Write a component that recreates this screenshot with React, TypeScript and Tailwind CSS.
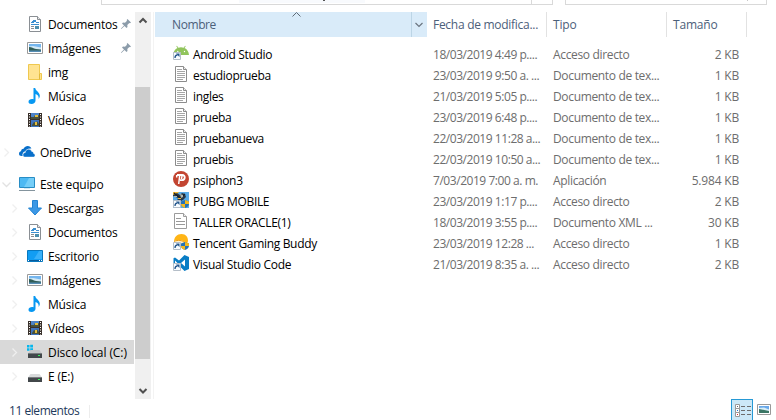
import type { ReactNode } from "react";

const Svg = ({ children }: { children: ReactNode }) => (
  <svg width="16" height="16" viewBox="0 0 16 16" className="block shrink-0">{children}</svg>
);

const DocIcon = () => (
  <Svg>
    <path d="M2.5.5h8l3 3v12h-11z" fill="#fff" stroke="#8a8f94" />
    <path d="M10.5.5v3h3" fill="#e8e8e8" stroke="#8a8f94" />
    <path d="M4 6.500h3M6 4.500h3M5 5.500h4M9 6.500h3M4 8.500h8" stroke="#3b8fd0" />
    <path d="M4 10.500h3M4 12.500h3" stroke="#8a8f94" />
    <path d="M8 10h4v3H8z" fill="#4d8fae" />
  </Svg>
);
const ImageIcon = () => (
  <Svg>
    <path d="M.5 2.500h15v11H.5z" fill="#fff" stroke="#9a9a9a" />
    <path d="M2 4h12v8H2z" fill="#75b6ee" />
    <path d="M2 6.500l4-.5 8 1.500V10H2z" fill="#d3e9f5" />
    <path d="M2 7c3 0 4 1.500 7 2l5 .5V11H2z" fill="#315d57" />
    <path d="M2 10.500h12V12H2z" fill="#568eb5" />
  </Svg>
);
const FolderIcon = () => (
  <Svg>
    <path d="M1.500.5h11v9h2v6h-13z" fill="#ffe391" stroke="#efc84f" />
    <path d="M12.500 9.500v6" stroke="#e2b93b" />
  </Svg>
);
const MusicIcon = () => (
  <Svg>
    <path d="M6.500 0h1.700c.3 3 4.600 4 4.600 7.800 0 1.300-.5 2.400-1.200 3.200.5-2.700-.7-4.300-3.100-5v6.700c0 1.900-1.700 3.300-4 3.300-2 0-3-1-3-2.300C1.500 12 3.200 11 5 11c.6 0 1.100.1 1.500.2z" fill="#0798f2" />
  </Svg>
);
const VideoIcon = () => (
  <Svg>
    <path d="M1 1h14v14H1z" fill="#39312b" />
    <path d="M4 1h8v6H4z" fill="#4d83c7" />
    <path d="M4 8h8v7H4z" fill="#3f74be" />
    <path d="M4 5h3l1-2 2 1 2-1v4H4zM5 13l2-3 2 1 1-2 2 3v2H5z" fill="#46513d" />
    <path d="M8 3h3v2H8zM8 10h2v3H8z" fill="#e4bd3b" />
    <path d="M2.500 2v13M13.500 2v13" stroke="#fff" strokeDasharray="1 1.500" />
  </Svg>
);
const CloudIcon = () => (
  <Svg>
    <path d="M3.700 12H2.500C.9 12 0 11 0 9.700s.9-2.200 2-2.400C2.200 5.500 3.300 4.700 4.600 4.800 5.500 3 7 2 8.700 2c1.900 0 3.100 1 3.700 2.500C8.800 4.200 7 5.600 6.500 7.300 4.300 7.400 3 9.500 3.700 12z" fill="#086fca" />
    <path d="M6.200 13C4.900 13 4 12 4 10.900c0-1.300 1-2.200 2.300-2.300.1-2 1.500-3.300 3.300-3.300 1.500 0 2.600.8 3.100 2.100 1.300.1 1.900 1 1.800 2 1 .2 1.500.9 1.500 1.800 0 1-.7 1.800-1.800 1.800z" fill="#086fca" stroke="#fff" strokeWidth=".4" />
  </Svg>
);
const ComputerIcon = () => (
  <Svg>
    <path d="M.5 1.500h15v10H.5z" fill="#4db9f3" stroke="#288dc5" />
    <path d="M10 2h5v9H5z" fill="#75cef8" />
    <path d="M5 12h6v1H5z" fill="#d5e8f2" />
    <path d="M0 14.500h16" stroke="#84949d" />
  </Svg>
);
const DownloadIcon = () => (
  <Svg><path d="M5.500.5h5V8h4L8 15 1.500 8h4z" fill="#3c98e5" stroke="#2384d3" /></Svg>
);
const DesktopIcon = () => (
  <Svg>
    <path d="M.5 2.500h15v11H.5z" fill="#119df3" stroke="#0878bf" />
    <path d="M12 3h3v8H7z" fill="#39b1fa" />
    <path d="M1 12.500h14" stroke="#075b9b" />
    <path d="M1 12.500h1M12 12.500h1M14 12.500h1" stroke="#fff" />
  </Svg>
);
const DriveIcon = ({ system = false }: { system?: boolean }) => (
  <Svg>
    {system && <path d="M0 1h2.500v2.500H0zm3.200-.3H6v2.800H3.200zM0 4.200h2.500v2.500H0zm3.200 0H6V7H3.200z" fill="#08b7ed" />}
    <path d="M3.500 6h9L15 9.500H1z" fill={system ? "#c4c6c7" : "#d8dadb"} />
    <path d="M1 9.500h14V14H1z" fill="#42474a" />
    <path d="M1 9.500h14" stroke="#777c7e" />
    <path d="M11 11h2v1h-2z" fill="#35f55c" />
  </Svg>
);

const Shortcut = () => (
  <>
    <path d="M.5 8.500h7v7h-7z" fill="#f8fcff" stroke="#b5bec8" />
    <path d="M2 14c0-2 1-3 2.500-3" fill="none" stroke="#24578d" strokeWidth="1.300" />
    <path d="M3 9.500h3.500V13z" fill="#24578d" />
  </>
);
const Shield = () => (
  <>
    <path d="M12 8l4 1.500v2.300c0 2-1.500 3.300-4 4.200-2.500-.9-4-2.200-4-4.200V9.500z" fill="#2473b9" />
    <path d="M12 8l4 1.500V12h-4zM8 12h4v4c-2.500-.9-4-2-4-4z" fill="#f3b91e" />
  </>
);
const AndroidIcon = () => (
  <Svg>
    <path d="M0 10c.3-3.500 2-5.800 4.500-7L3.300 1.200l.6-.4 1.500 1.900a9 9 0 0 1 5.200 0L12.100.8l.6.4L11.500 3c2.600 1.200 4.200 3.500 4.500 7z" fill="#91c45c" />
    <circle cx="4.800" cy="6.500" r=".7" fill="#fff" /><circle cx="11.500" cy="6.500" r=".7" fill="#fff" />
    <g transform="translate(0 -1)"><Shortcut /></g>
  </Svg>
);
const TextIcon = () => (
  <Svg>
    <path d="M2.500.5h8l3 3v12h-11z" fill="#fff" stroke="#8c8c8c" />
    <path d="M10.500.5v3h3" fill="#eee" stroke="#8c8c8c" />
    <path d="M4 3.500h5M4 5.500h8M4 7.500h8M4 9.500h8M4 11.500h8M4 13.500h6" stroke="#a6a6a6" />
  </Svg>
);
const XmlIcon = () => (
  <Svg>
    <path d="M1.500.5h9l3 3v12h-12z" fill="#fff" stroke="#9b9b9b" />
    <path d="M10.500.5v3h3" fill="#eee" stroke="#9b9b9b" />
    <path d="M3 5.500h5M3 8.500h9M3 11.500h9" stroke="#999" />
  </Svg>
);
const PsiphonIcon = () => (
  <Svg>
    <circle cx="8" cy="8" r="8" fill="#c34531" />
    <path d="M4 4h5.200c3.700 0 3.200 5.200-.4 5.200H7" fill="none" stroke="#fff" strokeWidth="1.800" />
    <path d="M6.700 4.500L5.700 13M3.700 4v2.500M9 5l-.5 3" stroke="#fff" strokeWidth="1.500" />
  </Svg>
);
const PubgIcon = () => (
  <Svg>
    <path d="M0 0h16v16H0z" fill="#58aae8" />
    <path d="M0 0h6L3 3.500H0z" fill="#f2b734" />
    <path d="M0 3l4-2 3 2 2-2 3 1 1 3-3 3-2 1H4l1-3-5-2z" fill="#283849" />
    <path d="M1 1l6 5 5-4" fill="none" stroke="#171f27" strokeWidth="1.200" />
    <path d="M7 2l3 1v2L8 6zM1 4h3v1H1z" fill="#b4b7ae" />
    <path d="M5 6h3v1H5z" fill="#edb83a" />
    <Shortcut /><Shield />
  </Svg>
);
const BuddyIcon = () => (
  <Svg>
    <path d="M1 8C1 3 4 0 8.500 0 13 0 15 3 15 6.500c0 1.500-.5 2.500-2 3L8 8z" fill="#ffb516" />
    <path d="M1 7c4-2 8-1 11 1l-1 2H1z" fill="#fff1cb" />
    <path d="M1 7.500c4-2 8-1 11 1" fill="none" stroke="#ed9d12" />
    <Shortcut /><Shield />
  </Svg>
);
const CodeIcon = () => (
  <Svg>
    <path d="M11.500 0L16 2v12l-4.500 2L6 10.500 2 13.500.5 12.700V3.300L2 2.500l4 3zM12 4.500L8 8l4 3.500zM2 5.500v5L4.500 8z" fill="#087dc5" fillRule="evenodd" />
    <Shortcut />
  </Svg>
);
const Pin = () => (
  <svg width="10" height="10" viewBox="0 0 10 10" className="ml-auto mr-[3px] block shrink-0">
    <path d="M6.500 0L10 3.500l-1 .8-.7-.3-2 2 .2 2-1 1-2-2L.6 9.800 0 10l.2-.7L3 6.500l-2-2 1-1 2 .2 2-2-.3-.7z" fill="#8c9caa" />
  </svg>
);
const Chevron = ({ down = false }: { down?: boolean }) => (
  <svg width="9" height="9" viewBox="0 0 9 9" className="block shrink-0">
    <path d={down ? "M.5 2.500l4 4 4-4" : "M2.500.5l4 4-4 4"} fill="none" stroke={down ? "#e2e2e2" : "#efefef"} strokeWidth="1.300" />
  </svg>
);

type Place = { name: string; icon: () => ReactNode; pinned?: boolean; expand?: boolean; active?: boolean };

const quick: Place[] = [
  { name: "Documentos", icon: DocIcon, pinned: true },
  { name: "Imágenes", icon: ImageIcon, pinned: true },
  { name: "img", icon: FolderIcon },
  { name: "Música", icon: MusicIcon },
  { name: "Vídeos", icon: VideoIcon },
];
const computer: Place[] = [
  { name: "Descargas", icon: DownloadIcon, expand: true },
  { name: "Documentos", icon: DocIcon, expand: true },
  { name: "Escritorio", icon: DesktopIcon, expand: true },
  { name: "Imágenes", icon: ImageIcon, expand: true },
  { name: "Música", icon: MusicIcon, expand: true },
  { name: "Vídeos", icon: VideoIcon, expand: true },
  { name: "Disco local (C:)", icon: () => <DriveIcon system />, expand: true, active: true },
  { name: "E (E:)", icon: () => <DriveIcon />, expand: true },
];

const PlaceRow = ({ name, icon: Icon, pinned, expand, active }: Place) => (
  <div className={`flex h-6 w-[134px] items-center ${active ? "bg-[#d9d9d9] tracking-[-0.08px]" : ""}`}>
    <div className="flex w-[27px] shrink-0 justify-end pr-[8px]">{expand && <Chevron />}</div>
    <Icon />
    <span className="ml-[5px] pt-[2px]">{name}</span>
    {pinned && <Pin />}
  </div>
);
const RootRow = ({ name, open, children }: { name: string; open?: boolean; children: ReactNode }) => (
  <div className="flex h-6 items-center">
    <div className="flex w-[19px] shrink-0 justify-end pr-[8px]"><Chevron down={open} /></div>
    {children}
    <span className="ml-[5px] pt-[2px]">{name}</span>
  </div>
);

type FileEntry = [() => ReactNode, string, string, string, string];
const files: FileEntry[] = [
  [AndroidIcon, "Android Studio", "18/03/2019 4:49 p....", "Acceso directo", "2 KB"],
  [TextIcon, "estudioprueba", "23/03/2019 9:50 a. ...", "Documento de tex...", "1 KB"],
  [TextIcon, "ingles", "21/03/2019 5:05 p....", "Documento de tex...", "1 KB"],
  [TextIcon, "prueba", "23/03/2019 6:48 p....", "Documento de tex...", "1 KB"],
  [TextIcon, "pruebanueva", "22/03/2019 11:28 a...", "Documento de tex...", "1 KB"],
  [TextIcon, "pruebis", "22/03/2019 10:50 a...", "Documento de tex...", "1 KB"],
  [PsiphonIcon, "psiphon3", "7/03/2019 7:00 a. m.", "Aplicación", "5.984 KB"],
  [PubgIcon, "PUBG MOBILE", "23/03/2019 1:17 p....", "Acceso directo", "2 KB"],
  [XmlIcon, "TALLER ORACLE(1)", "18/03/2019 3:55 p....", "Documento XML ...", "30 KB"],
  [BuddyIcon, "Tencent Gaming Buddy", "23/03/2019 12:28 ...", "Acceso directo", "1 KB"],
  [CodeIcon, "Visual Studio Code", "21/03/2019 8:35 a. ...", "Acceso directo", "2 KB"],
];

const ScrollArrow = ({ down = false }: { down?: boolean }) => (
  <svg width="16" height="17" viewBox="0 0 16 17" className="block shrink-0">
    <path d={down ? "M4.500 7l3.500 3.500L11.500 7" : "M4.500 10.500L8 7l3.500 3.500"} fill="none" stroke="#505050" strokeWidth="2" />
  </svg>
);

export default function App() {
  return (
    <div className="flex h-[420px] w-[776px] flex-col overflow-hidden whitespace-nowrap bg-white font-['Open_Sans','Noto_Sans',sans-serif] text-[12px] leading-4 tracking-[-0.18px] text-black">
      <div className="flex h-3 shrink-0 items-start">
        <div className="ml-[101px] flex h-[5px] w-[452px] border-x border-b border-[#d9d9d9]">
          <div className="ml-[137px] h-[3px] w-[126px] bg-[#f8fafd]">
            <div className="ml-[84px] h-px w-[2px] bg-[#555]" />
          </div>
          <div className="ml-auto mr-[20px] w-px bg-[#d9d9d9]" />
        </div>
        <div className="ml-3 flex h-[5px] w-[202px] border-x border-b border-[#d9d9d9]">
          <div className="ml-auto mr-[18px] h-px w-px bg-[#c8c8c8]" />
        </div>
      </div>

      <div className="flex h-[387px] shrink-0">
        <aside className="w-[135px] shrink-0 overflow-hidden">
          {quick.map((p) => <PlaceRow key={p.name} {...p} />)}
          <div className="h-2" />
          <RootRow name="OneDrive"><CloudIcon /></RootRow>
          <div className="h-2" />
          <RootRow name="Este equipo" open><ComputerIcon /></RootRow>
          {computer.map((p) => <PlaceRow key={p.name} {...p} />)}
        </aside>
        <div className="flex w-4 shrink-0 flex-col bg-[#f0f0f0]">
          <ScrollArrow />
          <div className="mt-[58px] h-[272px] w-[15px] bg-[#cdcdcd]" />
          <div className="mt-auto"><ScrollArrow down /></div>
        </div>
        <div className="ml-[2px] w-px bg-[#f3f3f3]" />

        <main className="ml-px">
          <div className="flex h-[25px] text-[#4c607a]">
            <div className="relative flex w-[272px] items-center bg-[#d9ebf9] pl-[17px]">
              <span className="tracking-[-0.4px]">Nombre</span>
              <svg width="9" height="6" viewBox="0 0 9 6" className="absolute left-[137px] top-0">
                <path d="M.5 4.500l4-4 4 4" fill="none" stroke="#616c76" />
              </svg>
              <div className="ml-auto flex h-full w-4 items-center justify-center border-l border-[#bcd5e6] pr-px">
                <svg width="8" height="6" viewBox="0 0 8 6"><path d="M.5 1L4 4.500 7.500 1" fill="none" stroke="#6b7580" strokeWidth="1.200" /></svg>
              </div>
            </div>
            <div className="flex w-[120px] items-center border-r border-[#e2e2e2] pl-[6px] tracking-[-0.28px]">Fecha de modifica...</div>
            <div className="flex w-[120px] items-center border-r border-[#e2e2e2] pl-[6px]">Tipo</div>
            <div className="flex w-[80px] items-center border-r border-[#e2e2e2] pl-[6px]">Tamaño</div>
          </div>
          <div className="pt-[7px] text-[#6d6d6d]">
            {files.map(([Icon, name, date, type, size]) => (
              <div key={name} className="flex h-[21px] items-start leading-[21px]">
                <div className="flex w-[278px] gap-1 pl-[18px] tracking-[-0.32px] text-black">
                  <div className="pt-px"><Icon /></div>
                  <span>{name}</span>
                </div>
                <div className="w-[120px] tracking-[-0.45px]">{date}</div>
                <div className="w-[120px] tracking-[-0.34px]">{type}</div>
                <div className="w-[66px] text-right">{size}</div>
              </div>
            ))}
          </div>
        </main>
      </div>

      <footer className="flex h-[21px] shrink-0 text-[#1e395b]">
        <div className="w-[89px] pl-[9px] pt-1 tracking-[-0.45px]">11 elementos</div>
        <div className="mt-[6px] h-[13px] w-px bg-[#ededed]" />
        <div className="ml-auto mr-[5px] flex">
          <div className="h-[22px] w-[22px] border border-[#2699d5] bg-[#cce8f7]">
            <svg width="20" height="20" viewBox="0 0 20 20">
              <path d="M3.500 4.500h4v4h-4zM3.500 8.500h4v4h-4zM3.500 12.500h4v4h-4z" fill="#fff" stroke="#999" />
              <path d="M9 6.500h4M15 6.500h4M9 10.500h4M15 10.500h4M9 14.500h4M15 14.500h4" stroke="#6d6d6d" />
              <path d="M5 6h1v1H5z" fill="#667" /><path d="M5 10h1v1H5z" fill="#2576d2" /><path d="M5 14h1v1H5z" fill="#e32828" />
            </svg>
          </div>
          <svg width="14" height="12" viewBox="0 0 14 12" className="ml-1 mt-[5px]">
            <path d="M.5.5h13v10H.5z" fill="#fff" stroke="#999" />
            <path d="M2 2h10v7H2z" fill="#6aa9ea" /><path d="M2 4l5-.5 5 2V7H2z" fill="#d8edf7" /><path d="M2 5l10 2v2H2z" fill="#3b7665" />
          </svg>
        </div>
      </footer>
    </div>
  );
}
